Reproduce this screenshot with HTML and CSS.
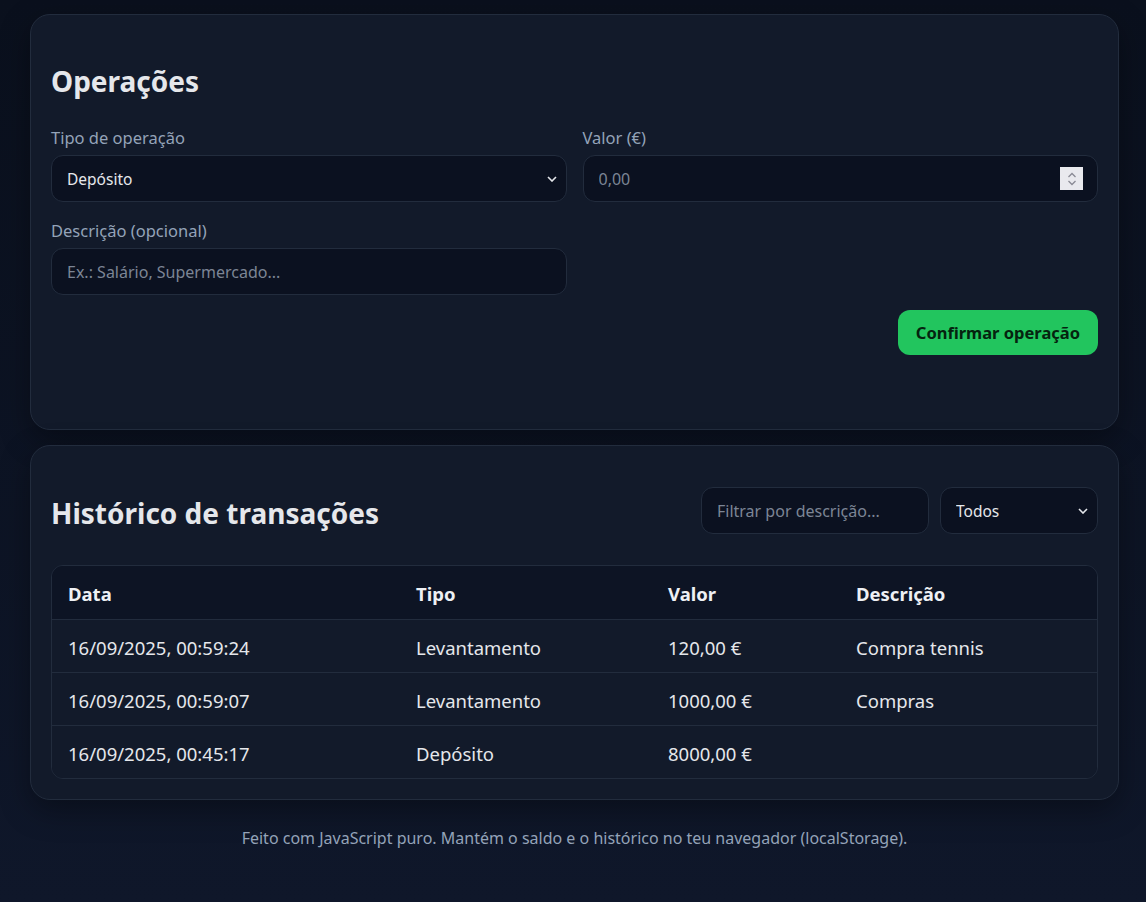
FILE: index.html
```html
<!DOCTYPE html>
<html lang="pt">
<head>
<meta charset="utf-8">
<title>Banco</title>
<link rel="stylesheet" href="styles.css">
</head>
<body>
<main class="wrap">
  <section class="card ops">
    <div class="card-head">
      <h2>Operações</h2>
    </div>
    <div class="form-grid">
      <div class="field">
        <label class="lbl">Tipo de operação</label>
        <select class="ctl select">
          <option>Depósito</option>
          <option>Levantamento</option>
        </select>
      </div>
      <div class="field">
        <label class="lbl">Valor (€)</label>
        <div class="num-wrap">
          <input class="ctl" type="text" placeholder="0,00">
          <span class="spin"><svg width="12" height="18" viewBox="0 0 12 18"><path d="M2.5 7 6 3.5 9.5 7" fill="none" stroke="#8a8a95" stroke-width="1.3"/><path d="M2.5 11 6 14.5 9.5 11" fill="none" stroke="#8a8a95" stroke-width="1.3"/></svg></span>
        </div>
      </div>
      <div class="field">
        <label class="lbl">Descrição (opcional)</label>
        <input class="ctl" type="text" placeholder="Ex.: Salário, Supermercado...">
      </div>
    </div>
    <div class="actions">
      <button class="btn">Confirmar operação</button>
    </div>
  </section>

  <section class="card hist">
    <div class="card-head hist-head">
      <h2>Histórico de transações</h2>
      <div class="filters">
        <input class="ctl filter" type="text" placeholder="Filtrar por descrição...">
        <select class="ctl select type">
          <option>Todos</option>
        </select>
      </div>
    </div>
    <div class="table-wrap">
      <table class="tx">
        <thead>
          <tr><th class="c1">Data</th><th class="c2">Tipo</th><th class="c3">Valor</th><th>Descrição</th></tr>
        </thead>
        <tbody>
          <tr><td>16/09/2025, 00:59:24</td><td>Levantamento</td><td>120,00 €</td><td>Compra tennis</td></tr>
          <tr><td>16/09/2025, 00:59:07</td><td>Levantamento</td><td>1000,00 €</td><td>Compras</td></tr>
          <tr><td>16/09/2025, 00:45:17</td><td>Depósito</td><td>8000,00 €</td><td></td></tr>
        </tbody>
      </table>
    </div>
  </section>

  <footer class="foot">Feito com JavaScript puro. Mantém o saldo e o histórico no teu navegador (localStorage).</footer>
</main>
</body>
</html>
```

FILE: styles.css
```css
* { box-sizing: border-box; }
html, body { margin: 0; height: 100%; }
body {
  font-family: "Noto Sans", "Open Sans", sans-serif;
  color: #e5e7eb;
  background: linear-gradient(180deg, #0a101d 0%, #0f172a 100%);
  min-height: 902px;
}
.wrap {
  width: 1089px;
  margin-left: 30px;
  padding-top: 14px;
  display: flex;
  flex-direction: column;
  gap: 15px;
}
.card {
  background: #121a2a;
  border: 1px solid #222c3d;
  border-radius: 20px;
  padding: 20px;
  box-shadow: 0 10px 30px rgba(0, 0, 0, 0.35);
}
.card-head {
  display: flex;
  align-items: center;
  justify-content: space-between;
  min-height: 46px;
  margin-top: 21px;
}
.card-head h2 {
  margin: 0;
  padding-top: 4px;
  font-size: 28px;
  line-height: 34px;
  font-weight: 700;
  color: #e5e7eb;
}
.ops .card-head { margin-bottom: 25px; }
.form-grid {
  display: grid;
  grid-template-columns: 1fr 1fr;
  column-gap: 16px;
  row-gap: 18px;
}
.field { display: flex; flex-direction: column; }
.lbl {
  font-size: 16.5px;
  line-height: 22px;
  color: #94a3b8;
  margin-bottom: 6px;
}
.ctl {
  height: 47px;
  width: 100%;
  background: #0b1120;
  border: 1px solid #222c3d;
  border-radius: 12px;
  color: #e5e7eb;
  font-family: inherit;
  font-size: 16px;
  padding: 0 15px;
  outline: none;
}
.ctl::placeholder { color: #7c8595; }
.select {
  appearance: none;
  -webkit-appearance: none;
  font-size: 15.5px;
  background-image: url("data:image/svg+xml;utf8,<svg xmlns='http://www.w3.org/2000/svg' width='10' height='6' viewBox='0 0 10 6'><path d='M1 1l4 4 4-4' fill='none' stroke='%23e5e7eb' stroke-width='1.6'/></svg>");
  background-repeat: no-repeat;
  background-position: right 9px center;
}
.num-wrap { position: relative; }
.spin {
  position: absolute;
  right: 15px;
  top: 12px;
  width: 23px;
  height: 23px;
  background: #e9e9ee;
  display: flex;
  align-items: center;
  justify-content: center;
}
.actions {
  display: flex;
  justify-content: flex-end;
  margin-top: 15px;
  margin-bottom: 54px;
}
.btn {
  height: 45px;
  padding: 0 18px;
  border: none;
  border-radius: 12px;
  background: #22c55e;
  color: #05230f;
  font-family: inherit;
  font-size: 16.5px;
  font-weight: 700;
}
.hist-head { margin-bottom: 31px; }
.filters { display: flex; gap: 11px; }
.filter { width: 228px; }
.type { width: 158px; }
.table-wrap {
  border: 1px solid #222c3d;
  border-radius: 12px;
  overflow: hidden;
}
.tx {
  width: 100%;
  border-collapse: collapse;
  font-size: 18.5px;
}
.tx th, .tx td {
  text-align: left;
  padding: 3px 16px 0;
  height: 53px;
}
.tx th {
  background: #0d1424;
  font-weight: 700;
  color: #eef0f4;
}
.tx td { color: #e5e7eb; border-top: 1px solid #222c3d; }
.tx tbody tr { background: #121a2a; }
.c1 { width: 348px; }
.c2 { width: 252px; }
.c3 { width: 188px; }
.foot {
  text-align: center;
  font-size: 16px;
  color: #94a3b8;
  margin-top: 12px;
  line-height: 22px;
}
```
